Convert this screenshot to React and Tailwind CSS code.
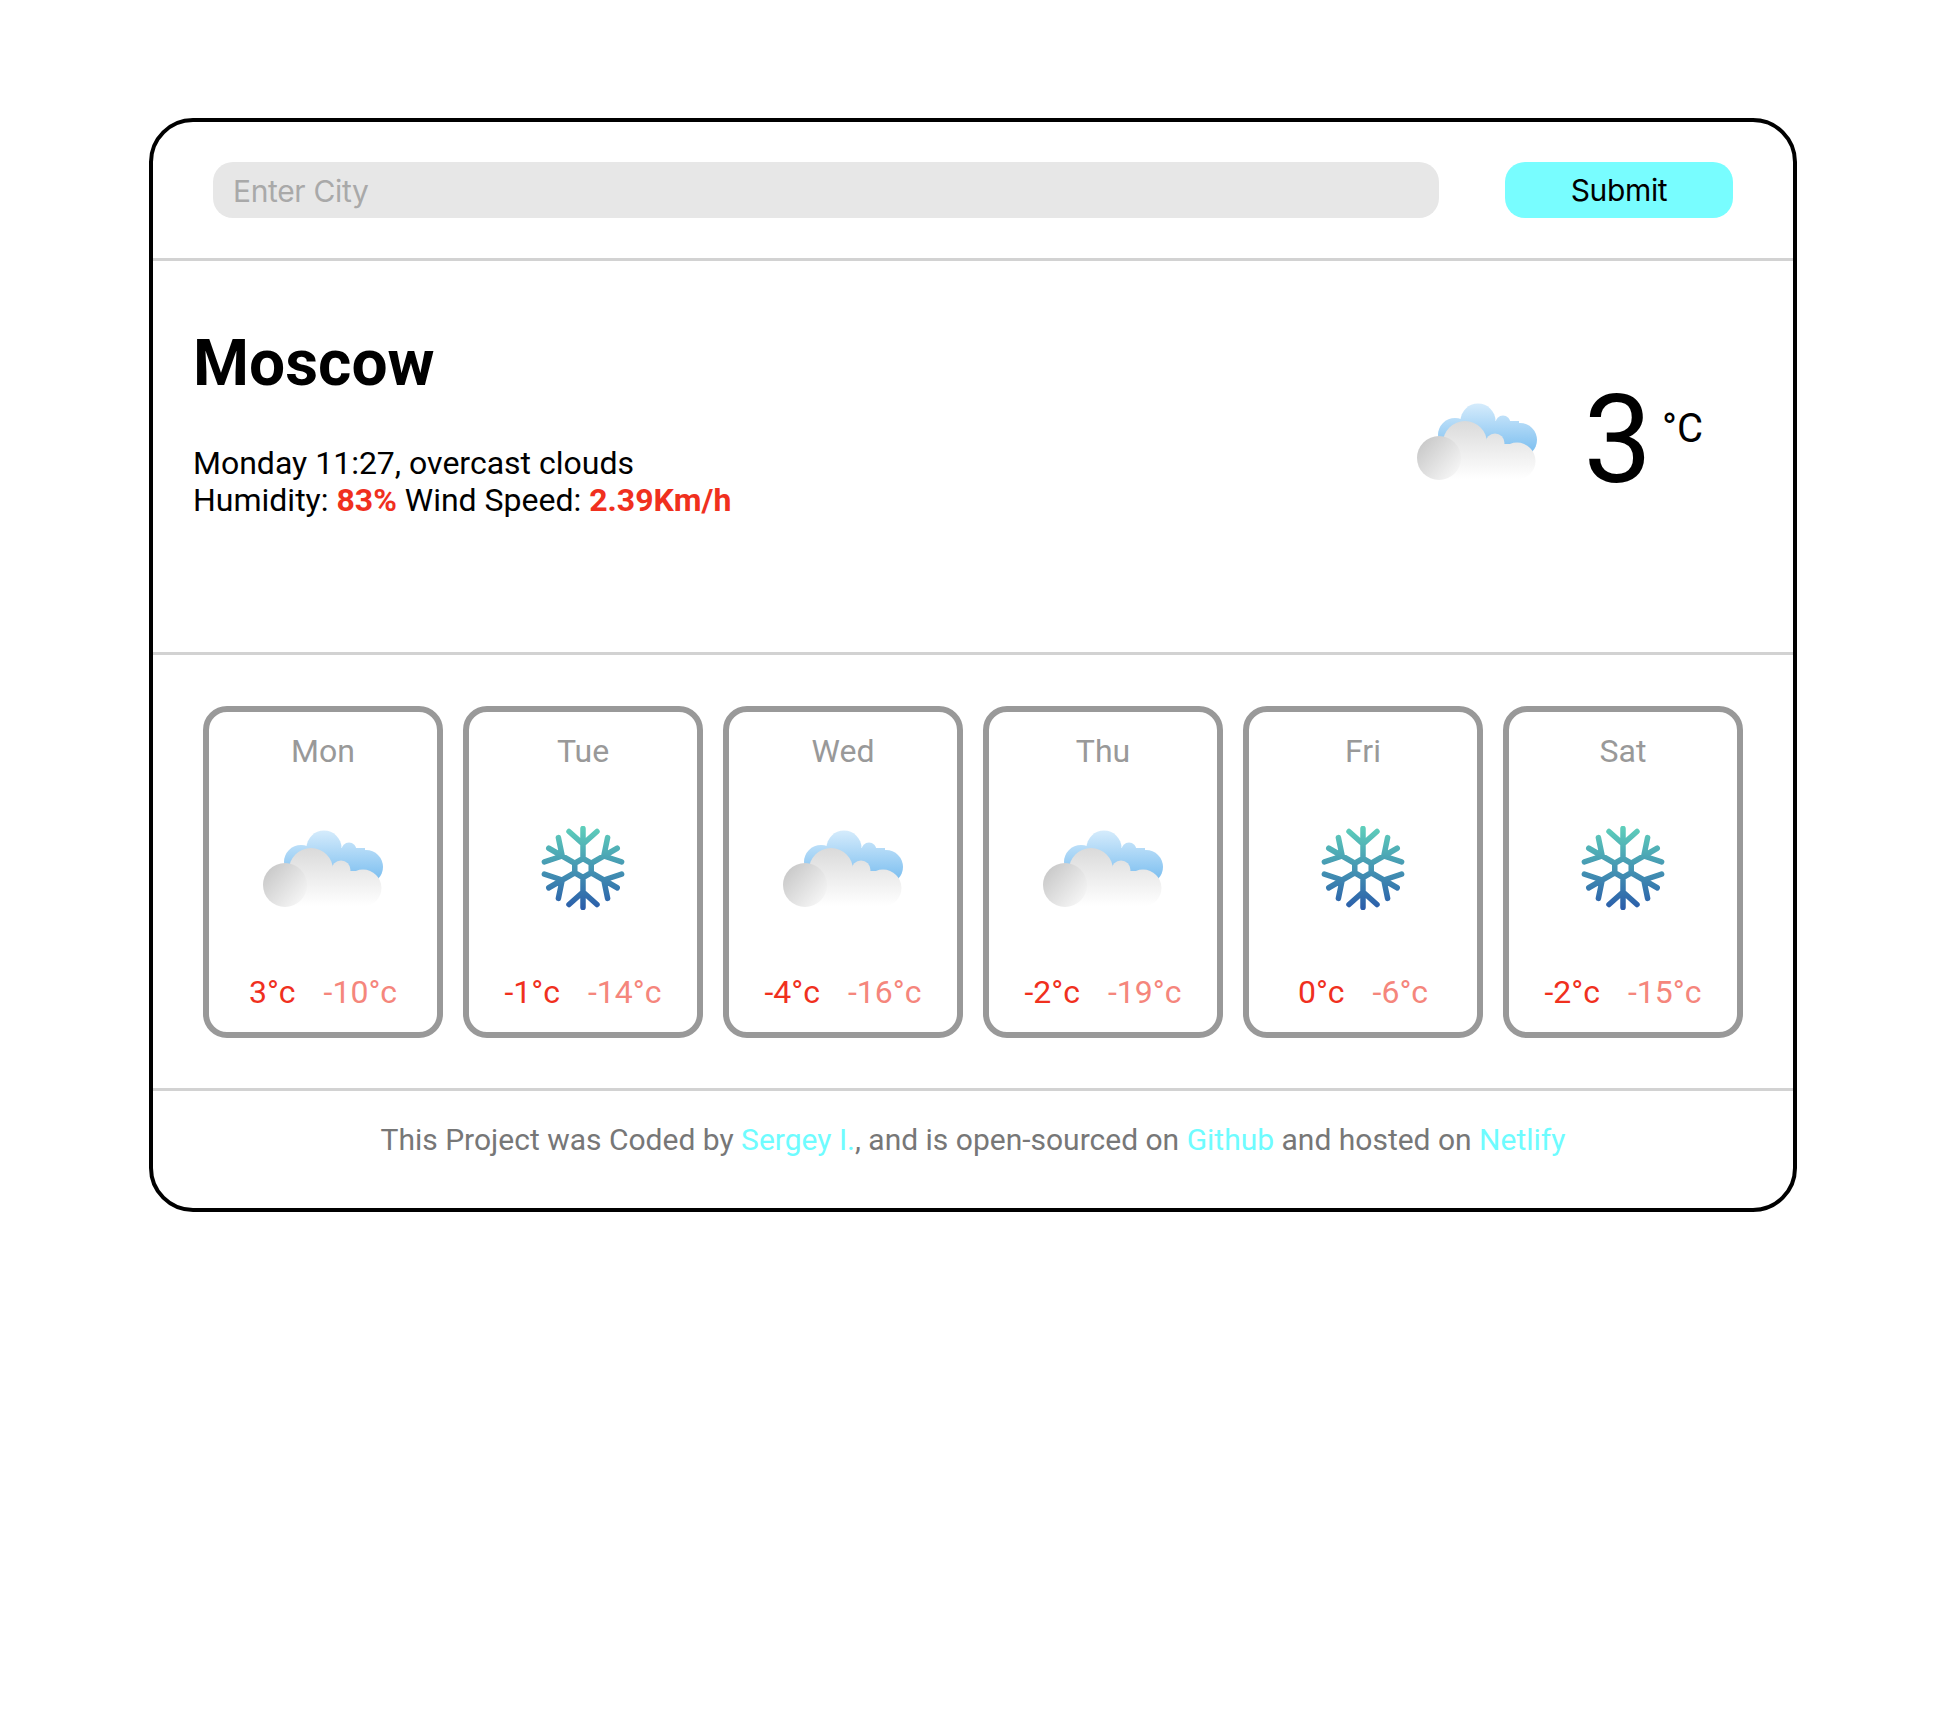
import React from 'react';

const forecast = [
  { day: 'Mon', icon: 'cloud', high: '3°c', low: '-10°c' },
  { day: 'Tue', icon: 'snow', high: '-1°c', low: '-14°c' },
  { day: 'Wed', icon: 'cloud', high: '-4°c', low: '-16°c' },
  { day: 'Thu', icon: 'cloud', high: '-2°c', low: '-19°c' },
  { day: 'Fri', icon: 'snow', high: '0°c', low: '-6°c' },
  { day: 'Sat', icon: 'snow', high: '-2°c', low: '-15°c' },
];

const CloudIcon = () => (
  <svg width="120" height="80" viewBox="0 0 120 80" className="block blur-[0.5px]">
    <defs>
      <linearGradient id="cloudBlue" gradientUnits="userSpaceOnUse" x1="0" y1="0" x2="0" y2="48">
        <stop offset="0" stopColor="#d6ecfc" />
        <stop offset="1" stopColor="#7fc0f0" />
      </linearGradient>
      <linearGradient id="cloudGrey" gradientUnits="userSpaceOnUse" x1="0" y1="18" x2="0" y2="76">
        <stop offset="0" stopColor="#dadada" />
        <stop offset="1" stopColor="#ffffff" />
      </linearGradient>
      <linearGradient id="cloudDark" gradientUnits="userSpaceOnUse" x1="4" y1="38" x2="42" y2="72">
        <stop offset="0" stopColor="#c8c8c8" />
        <stop offset="1" stopColor="#f8f8f8" />
      </linearGradient>
    </defs>
    <g fill="url(#cloudBlue)">
      <circle cx="61" cy="18" r="17.5" />
      <circle cx="38" cy="32" r="17" />
      <circle cx="86" cy="20" r="7.5" />
      <circle cx="103" cy="37" r="17" />
      <rect x="40" y="18" width="62" height="30" />
    </g>
    <g fill="url(#cloudGrey)">
      <circle cx="48" cy="40" r="22" />
      <circle cx="78" cy="40" r="9.5" />
      <circle cx="100" cy="58" r="18.5" />
      <rect x="30" y="41" width="70" height="36" />
    </g>
    <circle cx="22" cy="55" r="22" fill="url(#cloudDark)" />
  </svg>
);

const rotatePoint = (x, y, deg) => {
  const a = (deg * Math.PI) / 180;
  return [x * Math.cos(a) - y * Math.sin(a) + 42, x * Math.sin(a) + y * Math.cos(a) + 42];
};

const line = (x1, y1, x2, y2, deg) => {
  const [ax, ay] = rotatePoint(x1, y1, deg);
  const [bx, by] = rotatePoint(x2, y2, deg);
  return `M${ax.toFixed(2)} ${ay.toFixed(2)}L${bx.toFixed(2)} ${by.toFixed(2)}`;
};

// six arms, worked out point by point so the gradient stays vertical
const snowPath = [0, 60, 120, 180, 240, 300]
  .map((deg) => [
    line(0, -9.5, 0, -39.5, deg),
    line(0, -24, -14, -36.5, deg),
    line(0, -24, 14, -36.5, deg),
    line(0, -9.5, 8.23, -4.75, deg),
  ].join(''))
  .join('');

const SnowIcon = () => (
  <svg width="84" height="84" viewBox="0 0 84 84" className="block blur-[0.5px]">
    <defs>
      <linearGradient id="snowFill" gradientUnits="userSpaceOnUse" x1="0" y1="0" x2="0" y2="84">
        <stop offset="0" stopColor="#5fd0bb" />
        <stop offset="1" stopColor="#2a5caa" />
      </linearGradient>
    </defs>
    <path d={snowPath} fill="none" stroke="url(#snowFill)" strokeWidth="5.5" strokeLinecap="round" strokeLinejoin="round" />
  </svg>
);

export default function App() {
  return (
    <div className="min-h-[1728px] bg-white pt-[118px] font-['Roboto',sans-serif] text-black">
      <div className="ml-[149px] h-[1094px] w-[1648px] rounded-[44px] border-4 border-black">
        {/* Search */}
        <form className="flex h-[139px] items-start gap-[66px] border-b-[3px] border-[#d2d2d2] pl-[60px] pr-[60px] pt-[40px]">
          <input
            type="text"
            placeholder="Enter City"
            className="h-[56px] w-[1226px] rounded-[20px] bg-[#e7e7e7] px-[20px] pt-[1px] font-['Inter',sans-serif] text-[30px] tracking-[-0.35px] text-black outline-none placeholder:text-[#a9a9a9]"
          />
          <button
            type="button"
            className="h-[56px] w-[228px] rounded-[20px] bg-[#78fdff] font-['Inter',sans-serif] text-[30px] tracking-[-0.35px] text-black"
          >
            Submit
          </button>
        </form>

        {/* Current weather */}
        <div className="flex h-[394px] justify-between border-b-[3px] border-[#d2d2d2] pl-[40px] pr-[90px]">
          <div className="pt-[65px]">
            <h1 className="text-[64px] font-bold leading-[75px]">Moscow</h1>
            <div className="mt-[44px] text-[32px] leading-[37px]">
              <p>Monday 11:27, overcast clouds</p>
              <p>
                Humidity: <span className="font-bold text-[#f0301e]">83%</span> Wind Speed:{' '}
                <span className="font-bold text-[#f0301e]">2.39Km/h</span>
              </p>
            </div>
          </div>
          <div className="flex items-start pt-[125px]">
            <div className="mt-[17px]">
              <CloudIcon />
            </div>
            <div className="-mt-[20px] ml-[46px] text-[122px] leading-[150px]">3</div>
            <div className="ml-[10px] mt-[19px] text-[40px] leading-[47px]">°C</div>
          </div>
        </div>

        {/* Forecast */}
        <div className="flex h-[436px] gap-[20px] border-b-[3px] border-[#d2d2d2] pl-[50px] pt-[51px]">
          {forecast.map((item) => (
            <div
              key={item.day}
              className="flex h-[332px] w-[240px] flex-col items-center rounded-[24px] border-[6px] border-[#999999]"
            >
              <div className="mt-[21px] text-[32px] leading-[37px] text-[#999999]">{item.day}</div>
              <div className="mt-[33px] flex h-[130px] items-center">
                {item.icon === 'cloud' ? (
                  <div className="pt-[3px]">
                    <CloudIcon />
                  </div>
                ) : (
                  <SnowIcon />
                )}
              </div>
              <div className="mt-[41px] flex gap-[28px] text-[32px] leading-[37px]">
                <span className="text-[#f0301e]">{item.high}</span>
                <span className="text-[#f5867c]">{item.low}</span>
              </div>
            </div>
          ))}
        </div>

        {/* Footer */}
        <p className="pt-[31px] text-center text-[30px] leading-[35px] text-[#777777]">
          This Project was Coded by <a className="text-[#6efcff]">Sergey I.</a>, and is open-sourced on{' '}
          <a className="text-[#6efcff]">Github</a> and hosted on <a className="text-[#6efcff]">Netlify</a>
        </p>
      </div>
    </div>
  );
}
